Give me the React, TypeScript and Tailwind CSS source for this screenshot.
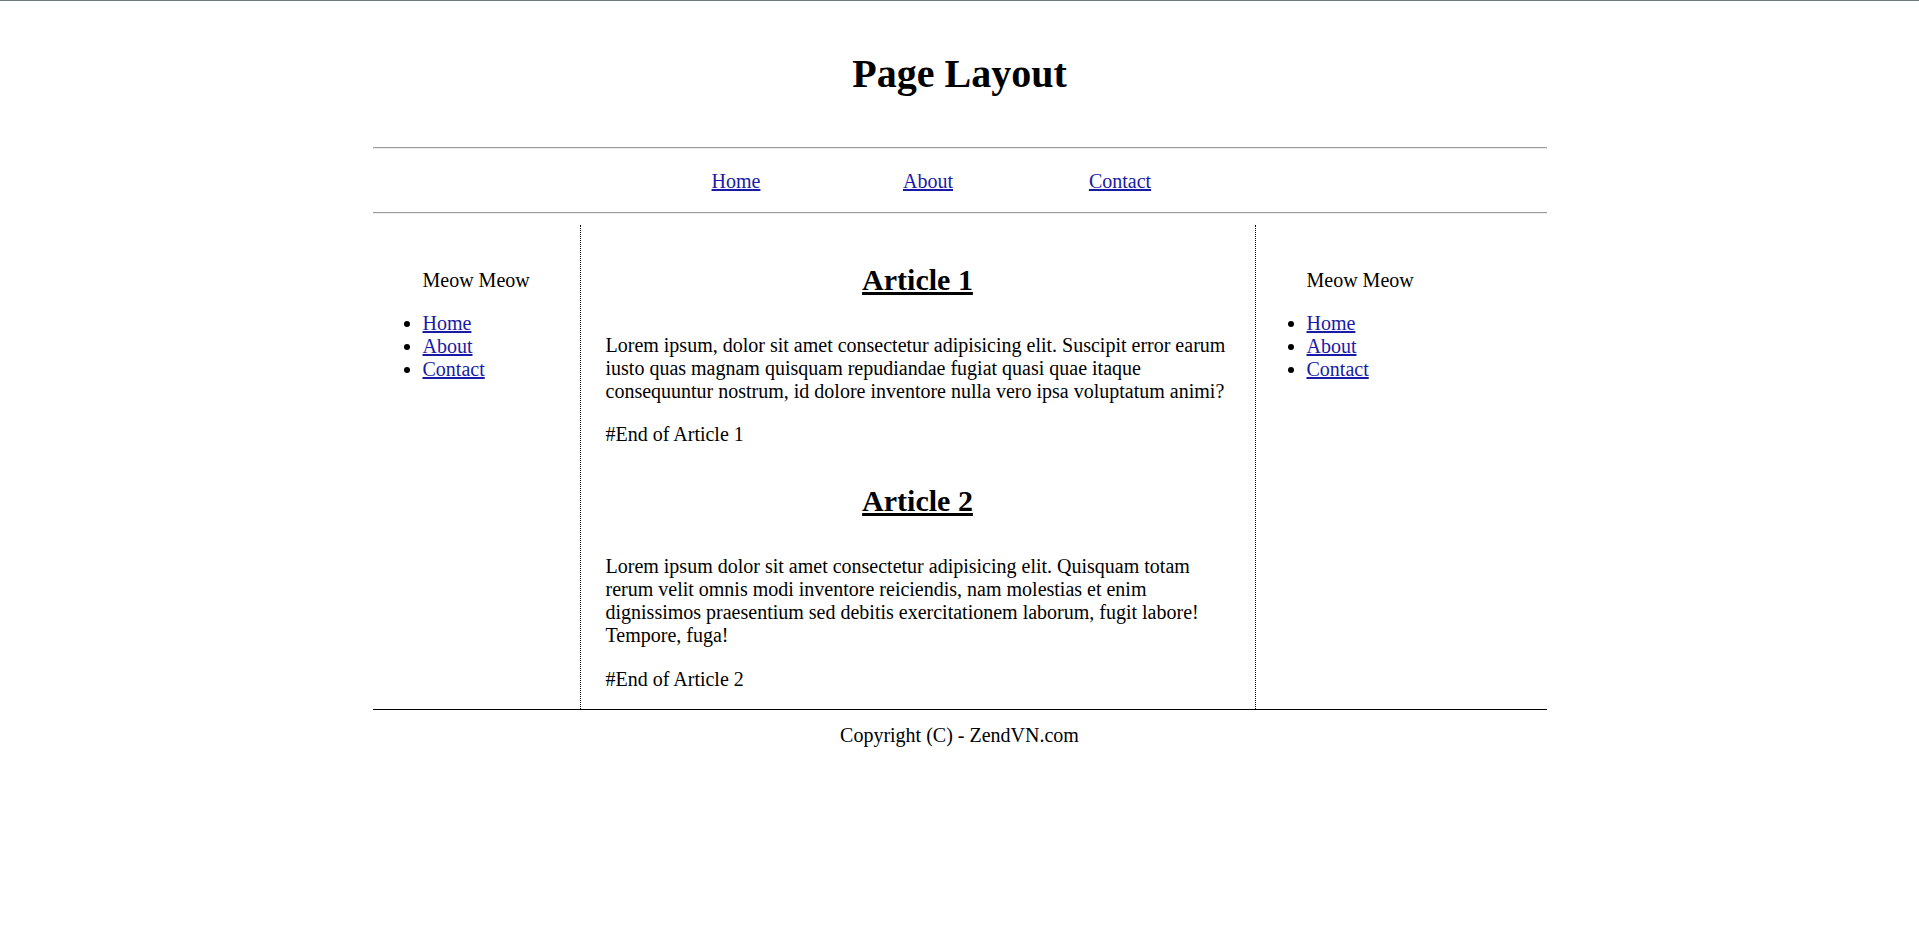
import React from "react";

const linkCls = "text-[#1a1aa6] underline";

function Sidebar({ pad }: { pad: string }) {
  return (
    <div className={`pt-[44px] ${pad}`}>
      <p className="mb-[20px]">Meow Meow</p>
      <ul className="list-disc list-outside">
        <li>
          <a href="#" className={linkCls}>Home</a>
        </li>
        <li>
          <a href="#" className={linkCls}>About</a>
        </li>
        <li>
          <a href="#" className={linkCls}>Contact</a>
        </li>
      </ul>
    </div>
  );
}

function Hr() {
  return <div className="h-[2px] border-t border-[#9c9c9c] border-b border-b-[#ececec]" />;
}

export default function App() {
  return (
    <div className="min-h-[931px] bg-white border-t border-[#6b7b7b] font-['Liberation_Serif','Times_New_Roman',serif] text-[20px] leading-[23px] text-black">
      <h1 className="text-center text-[40px] font-bold leading-[46px] pt-[50px]">Page Layout</h1>
      <div className="mx-auto w-[1174px] mt-[50px]">
        <Hr />
        <nav className="flex justify-center pr-[63px] pt-[21px] pb-[19px]">
          <div className="w-[192px] text-center">
            <a href="#" className={linkCls}>Home</a>
          </div>
          <div className="w-[192px] text-center">
            <a href="#" className={linkCls}>About</a>
          </div>
          <div className="w-[192px] text-center">
            <a href="#" className={linkCls}>Contact</a>
          </div>
        </nav>
        <Hr />
        <div className="mt-[11px] flex items-stretch">
          <div className="w-[207px] shrink-0">
            <Sidebar pad="pl-[50px]" />
          </div>
          <main className="w-[676px] shrink-0 border-x border-dotted border-black px-[25px] flex flex-col pb-[18px]">
            <h2 className="mt-[38px] text-center text-[30px] font-bold leading-[34px] underline">Article 1</h2>
            <p className="mt-[37px]">
              Lorem ipsum, dolor sit amet consectetur adipisicing elit. Suscipit error earum iusto quas magnam quisquam repudiandae fugiat quasi quae itaque consequuntur nostrum, id dolore inventore nulla vero ipsa voluptatum animi?
            </p>
            <p className="mt-[20px]">#End of Article 1</p>
            <h2 className="mt-[38px] text-center text-[30px] font-bold leading-[34px] underline">Article 2</h2>
            <p className="mt-[37px]">
              Lorem ipsum dolor sit amet consectetur adipisicing elit. Quisquam totam rerum velit omnis modi inventore reiciendis, nam molestias et enim dignissimos praesentium sed debitis exercitationem laborum, fugit labore! Tempore, fuga!
            </p>
            <p className="mt-[21px]">#End of Article 2</p>
          </main>
          <div className="w-[291px] shrink-0">
            <Sidebar pad="pl-[51px]" />
          </div>
        </div>
        <footer className="border-t border-black pt-[14px] text-center">Copyright (C) - ZendVN.com</footer>
      </div>
    </div>
  );
}
